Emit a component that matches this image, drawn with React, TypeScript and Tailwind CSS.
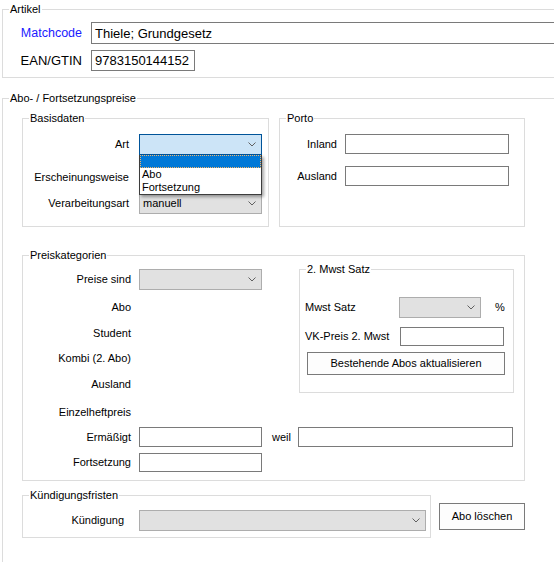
import React from "react";

type Props = { className?: string; children?: React.ReactNode };

function Group({ label, className = "", children }: Props & { label: string }) {
  return (
    <div className={`relative shrink-0 border border-[#dcdcdc] ${className}`}>
      <span className="absolute left-[6px] top-[-7px] bg-white px-[1px] leading-[13px] whitespace-nowrap">
        {label}
      </span>
      {children}
    </div>
  );
}

function TextBox({ className = "", children }: Props) {
  return (
    <div className={`shrink-0 flex items-center border border-[#7a7a7a] bg-white pl-[3px] whitespace-nowrap ${className}`}>
      {children}
    </div>
  );
}

function Chevron() {
  return (
    <svg width="8" height="5" viewBox="0 0 8 5" className="ml-auto mr-[5px] shrink-0">
      <path d="M0.5 0.5 L4 4 L7.5 0.5" fill="none" stroke="#606060" strokeWidth="1" />
    </svg>
  );
}

function Combo({ className = "", children, active = false }: Props & { active?: boolean }) {
  return (
    <div
      className={`shrink-0 flex items-center border pl-[3px] whitespace-nowrap ${
        active ? "bg-[#cce4f7] border-[#005499]" : "bg-[#e1e1e1] border-[#adadad]"
      } ${className}`}
    >
      {children}
      <Chevron />
    </div>
  );
}

function Label({ className = "", children }: Props) {
  return <span className={`shrink-0 text-right whitespace-nowrap ${className}`}>{children}</span>;
}

function Button({ className = "", children }: Props) {
  return (
    <div className={`shrink-0 flex items-center justify-center border border-[#7a7a7a] bg-[#fdfdfd] ${className}`}>
      {children}
    </div>
  );
}

export default function App() {
  return (
    <div className="w-[554px] h-[562px] overflow-hidden bg-white pt-[9px] pl-[2px] text-[11px] leading-[13px] text-black font-['Liberation_Sans',Arial,sans-serif]">
      <Group label="Artikel" className="w-[620px] h-[69px]">
        <div className="pt-[12px] text-[13px] leading-[15px]">
          <div className="flex items-center h-[22px]">
            <Label className="w-[79px] text-[12.5px] text-[#1a1aff]">Matchcode</Label>
            <TextBox className="ml-[9px] w-[560px] h-[22px]">Thiele; Grundgesetz</TextBox>
          </div>
          <div className="mt-[6px] flex items-center h-[21px]">
            <Label className="w-[79px]">EAN/GTIN</Label>
            <TextBox className="ml-[9px] w-[104px] h-[21px]">9783150144152</TextBox>
          </div>
        </div>
      </Group>

      <Group label="Abo- / Fortsetzungspreise" className="mt-[20px] w-[620px] h-[480px]">
        <div className="pl-[19px] pt-[19px]">
          <div className="flex items-start">
            <Group label="Basisdaten" className="w-[247px] h-[109px]">
              <div className="pt-[15px]">
                <div className="flex items-center h-[21px]">
                  <Label className="w-[106px]">Art</Label>
                  <div className="relative ml-[10px]">
                    <Combo active className="w-[123px] h-[21px]" />
                    <div className="absolute left-0 top-[21px] w-[123px] border-x border-b border-[#3c3c3c] bg-white shadow-[2px_2px_3px_rgba(0,0,0,0.35)] z-10">
                      <div className="h-[13px] bg-[#0078d7] border border-dotted border-[#f2b46a]" />
                      <div className="h-[13px] pl-[2px]">Abo</div>
                      <div className="h-[13px] pl-[2px]">Fortsetzung</div>
                    </div>
                  </div>
                </div>
                <div className="mt-[12px] flex items-center h-[21px]">
                  <Label className="w-[106px]">Erscheinungsweise</Label>
                  <Combo className="ml-[10px] w-[123px] h-[21px]" />
                </div>
                <div className="mt-[5px] flex items-center h-[21px]">
                  <Label className="w-[106px]">Verarbeitungsart</Label>
                  <Combo className="ml-[10px] w-[123px] h-[21px]">manuell</Combo>
                </div>
              </div>
            </Group>

            <Group label="Porto" className="ml-[10px] w-[246px] h-[109px]">
              <div className="pt-[15px]">
                <div className="flex items-center h-[20px]">
                  <Label className="w-[57px]">Inland</Label>
                  <TextBox className="ml-[8px] w-[164px] h-[20px]" />
                </div>
                <div className="mt-[12px] flex items-center h-[20px]">
                  <Label className="w-[57px]">Ausland</Label>
                  <TextBox className="ml-[8px] w-[164px] h-[20px]" />
                </div>
              </div>
            </Group>
          </div>

          <Group label="Preiskategorien" className="mt-[28px] w-[503px] h-[226px]">
            <div className="flex items-start">
              <div className="w-[276px] shrink-0 pt-[13px]">
                <div className="flex items-center h-[21px]">
                  <Label className="w-[108px]">Preise sind</Label>
                  <Combo className="ml-[8px] w-[123px] h-[21px]" />
                </div>
                <Label className="block w-[108px] h-[13px] mt-[11px]">Abo</Label>
                <Label className="block w-[108px] h-[13px] mt-[13px]">Student</Label>
                <Label className="block w-[108px] h-[13px] mt-[12px]">Kombi (2. Abo)</Label>
                <Label className="block w-[108px] h-[13px] mt-[13px]">Ausland</Label>
                <Label className="block w-[108px] h-[13px] mt-[15px]">Einzelheftpreis</Label>
              </div>

              <Group label="2. Mwst Satz" className="mt-[13px] w-[215px] h-[124px]">
                <div className="pl-[5px] pt-[27px]">
                  <div className="flex items-center h-[21px]">
                    <span className="w-[94px] shrink-0">Mwst Satz</span>
                    <Combo className="w-[82px] h-[21px]" />
                    <span className="ml-[14px]">%</span>
                  </div>
                  <div className="mt-[9px] flex items-center h-[19px]">
                    <span className="w-[95px] shrink-0 whitespace-nowrap">VK-Preis 2. Mwst</span>
                    <TextBox className="w-[104px] h-[19px]" />
                  </div>
                  <Button className="mt-[6px] ml-[2px] w-[198px] h-[23px]">Bestehende Abos aktualisieren</Button>
                </div>
              </Group>
            </div>

            <div className="mt-[8px] flex items-center h-[20px]">
              <Label className="w-[108px]">Ermäßigt</Label>
              <TextBox className="ml-[8px] w-[123px] h-[20px]" />
              <span className="ml-[10px] w-[26px] shrink-0">weil</span>
              <TextBox className="w-[215px] h-[20px]" />
            </div>
            <div className="mt-[6px] flex items-center h-[19px]">
              <Label className="w-[108px]">Fortsetzung</Label>
              <TextBox className="ml-[8px] w-[123px] h-[19px]" />
            </div>
          </Group>

          <div className="mt-[14px] flex items-start">
            <Group label="Kündigungsfristen" className="w-[409px] h-[43px]">
              <div className="pt-[14px] flex items-center h-[35px]">
                <Label className="w-[101px]">Kündigung</Label>
                <Combo className="ml-[15px] w-[287px] h-[21px]" />
              </div>
            </Group>
            <Button className="ml-[8px] mt-[8px] w-[86px] h-[27px]">Abo löschen</Button>
          </div>
        </div>
      </Group>
    </div>
  );
}
